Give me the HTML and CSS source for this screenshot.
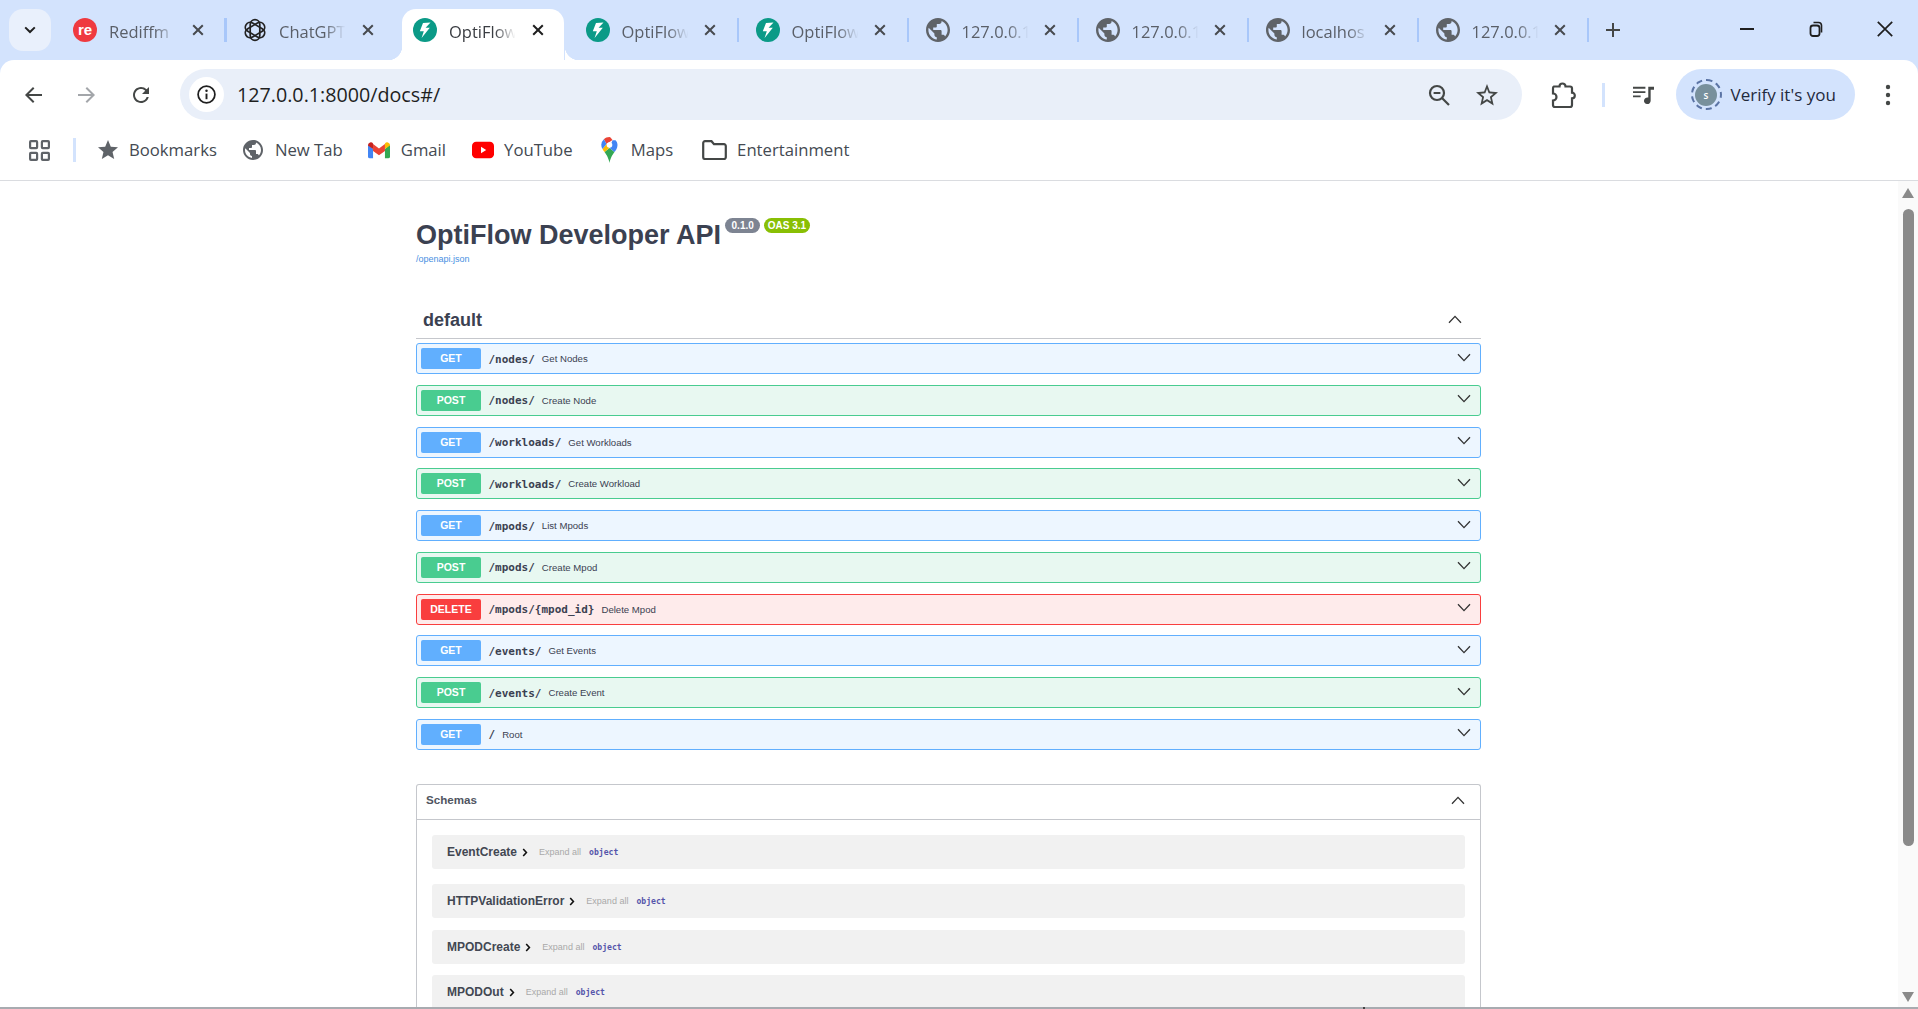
FILE: index.html
```html
<!DOCTYPE html>
<html lang="en">
<head>
<meta charset="utf-8">
<title>OptiFlow Developer API - Swagger UI</title>
<link rel="stylesheet" href="styles.css">
</head>
<body>
<svg class="defs" aria-hidden="true">
  <symbol id="i-x" viewBox="0 0 12 12"><path d="M1.2 1.2l9.6 9.6M10.8 1.2l-9.6 9.6" fill="none" stroke="currentColor" stroke-width="2"/></symbol>
  <symbol id="i-fast" viewBox="0 0 24 24"><circle cx="12" cy="12" r="12" fill="#0b9a87"/><path d="M17.500 4.400L10 5 6.800 13.200H10.800L8.600 20 16.800 9.800H12.600z" fill="#fff"/></symbol>
  <symbol id="i-globe" viewBox="2 2 20 20"><path fill="#5f6368" d="M12 2C6.48 2 2 6.48 2 12s4.48 10 10 10 10-4.48 10-10S17.52 2 12 2zm-1 17.93c-3.95-.49-7-3.85-7-7.93 0-.62.08-1.21.21-1.79L9 15v1c0 1.1.9 2 2 2v1.93zm6.9-2.54c-.26-.81-1-1.39-1.9-1.39h-1v-3c0-.55-.45-1-1-1H8v-2h2c.55 0 1-.45 1-1V7h2c1.1 0 2-.9 2-2v-.41c2.93 1.19 5 4.06 5 7.41 0 2.08-.8 3.97-2.1 5.39z"/></symbol>
  <symbol id="i-gpt" viewBox="0 0 24 24"><g fill="none" stroke="#222" stroke-width="1.7"><rect x="7.2" y="1.6" width="9.6" height="20.8" rx="4.8"/><rect x="7.2" y="1.6" width="9.6" height="20.8" rx="4.8" transform="rotate(60 12 12)"/><rect x="7.2" y="1.6" width="9.6" height="20.8" rx="4.8" transform="rotate(120 12 12)"/></g></symbol>
  <symbol id="i-down" viewBox="0 0 14 9"><path d="M1 1.2l6 6.4 6-6.4" fill="none" stroke="currentColor" stroke-width="1.3"/></symbol>
  <symbol id="i-up" viewBox="0 0 14 9"><path d="M1 7.8l6-6.4 6 6.4" fill="none" stroke="currentColor" stroke-width="1.3"/></symbol>
  <symbol id="i-right" viewBox="0 0 6 9"><path d="M1.2 1l3.2 3.5-3.2 3.5" fill="none" stroke="currentColor" stroke-width="1.6"/></symbol>
</svg>

<header class="chrome">
  <div class="tabstrip">
    <button class="tablist"><svg class="tablist-icon" viewBox="0 0 12 8"><path d="M1.2 1.4L6 6l4.8-4.6" fill="none" stroke="#1f1f1f" stroke-width="2"/></svg></button>
    <div class="tab"><span class="fav fav-re">re</span><span class="tab-title">Rediffm</span><svg class="tab-x"><use href="#i-x"/></svg><i class="tab-sep"></i></div>
    <div class="tab"><svg class="fav"><use href="#i-gpt"/></svg><span class="tab-title">ChatGPT</span><svg class="tab-x"><use href="#i-x"/></svg></div>
    <div class="tab tab-active"><svg class="fav"><use href="#i-fast"/></svg><span class="tab-title">OptiFlow</span><svg class="tab-x"><use href="#i-x"/></svg></div>
    <div class="tab"><svg class="fav"><use href="#i-fast"/></svg><span class="tab-title">OptiFlow</span><svg class="tab-x"><use href="#i-x"/></svg><i class="tab-sep"></i></div>
    <div class="tab"><svg class="fav"><use href="#i-fast"/></svg><span class="tab-title">OptiFlow</span><svg class="tab-x"><use href="#i-x"/></svg><i class="tab-sep"></i></div>
    <div class="tab"><svg class="fav"><use href="#i-globe"/></svg><span class="tab-title">127.0.0.1</span><svg class="tab-x"><use href="#i-x"/></svg><i class="tab-sep"></i></div>
    <div class="tab"><svg class="fav"><use href="#i-globe"/></svg><span class="tab-title">127.0.0.1</span><svg class="tab-x"><use href="#i-x"/></svg><i class="tab-sep"></i></div>
    <div class="tab"><svg class="fav"><use href="#i-globe"/></svg><span class="tab-title">localhos</span><svg class="tab-x"><use href="#i-x"/></svg><i class="tab-sep"></i></div>
    <div class="tab"><svg class="fav"><use href="#i-globe"/></svg><span class="tab-title">127.0.0.1</span><svg class="tab-x"><use href="#i-x"/></svg><i class="tab-sep"></i></div>
    <svg class="newtab" viewBox="0 0 16 16"><path d="M8 1v14M1 8h14" stroke="#444746" stroke-width="2" fill="none"/></svg>
    <div class="winctl">
      <svg class="win-btn" viewBox="0 0 16 16"><path d="M1 8h14" stroke="#1f1f1f" stroke-width="2"/></svg>
      <svg class="win-btn" viewBox="0 0 16 16"><rect x="2.5" y="4.5" width="9" height="10.5" rx="2.5" fill="none" stroke="#1f1f1f" stroke-width="1.8"/><path d="M5.5 1.5h5a3 3 0 0 1 3 3v7" fill="none" stroke="#1f1f1f" stroke-width="1.6"/></svg>
      <svg class="win-btn" viewBox="0 0 16 16"><path d="M.8.8l14.4 14.4M15.2.8L.8 15.2" stroke="#1f1f1f" stroke-width="1.7"/></svg>
    </div>
  </div>

  <div class="toolbar">
    <svg class="tb-btn" viewBox="0 0 24 24"><path fill="#444746" d="M21 11H7.83l5.59-5.59L12 4l-8 8 8 8 1.41-1.41L7.83 13H21v-2z"/></svg>
    <svg class="tb-btn tb-btn-gap" viewBox="0 0 24 24"><path fill="#a3a6aa" d="M3 11h13.17l-5.59-5.59L12 4l8 8-8 8-1.41-1.41L16.17 13H3v-2z"/></svg>
    <svg class="tb-btn tb-btn-gap" viewBox="0 0 24 24"><path fill="#444746" d="M17.65 6.35A7.958 7.958 0 0 0 12 4c-4.42 0-7.99 3.58-7.99 8s3.57 8 7.99 8c3.73 0 6.84-2.55 7.73-6h-2.08A5.99 5.99 0 0 1 12 18c-3.31 0-6-2.69-6-6s2.69-6 6-6c1.66 0 3.14.69 4.22 1.78L13 11h7V4l-2.35 2.35z"/></svg>
    <div class="omnibox">
      <span class="omni-info"><svg viewBox="0 0 24 24" class="omni-info-icon"><circle cx="12" cy="12" r="9.6" fill="none" stroke="#1f1f1f" stroke-width="2"/><path d="M12 11v6.4" stroke="#1f1f1f" stroke-width="2.2"/><circle cx="12" cy="7.6" r="1.4" fill="#1f1f1f"/></svg></span>
      <span class="omni-url">127.0.0.1:8000/docs#/</span>
      <svg class="omni-icon omni-zoom" viewBox="0 0 24 24"><circle cx="10" cy="10" r="7" fill="none" stroke="#444746" stroke-width="2.2"/><path d="M6.6 10h6.8" stroke="#444746" stroke-width="2"/><path d="M15 15l7 7" stroke="#444746" stroke-width="2.2"/></svg>
      <svg class="omni-icon" viewBox="0 0 24 24"><path fill="#444746" d="M23 9.2l-8.1-.7L12 1 9.100 8.500 1 9.200l6.100 5.300L5.300 22.500 12 18.300l6.700 4.200-1.800-8zM12 16l-4 2.500 1.100-4.700L5.500 10.700l4.800-.4L12 5.800l1.700 4.500 4.800.4-3.600 3.100 1.100 4.700z"/></svg>
    </div>
    <svg class="tb-ext" viewBox="0 0 26 28"><path d="M4 5.500h5.500a3 3 0 0 1 6 0H20a2 2 0 0 1 2 2v4.200a2.800 2.800 0 0 1 0 5.600V24a2 2 0 0 1-2 2H5a2 2 0 0 1-2-2v-4.500a3.500 3.500 0 0 0 0-7V7.500a2 2 0 0 1 1-2z" fill="none" stroke="#444746" stroke-width="2.200"/></svg>
    <i class="tb-sep"></i>
    <svg class="tb-media" viewBox="0 0 24 22"><path d="M1 4h13M1 8.500h13M1 13h8" stroke="#444746" stroke-width="2" fill="none"/><path d="M17 3h6v3h-3.500v11.500a3.500 3.500 0 1 1-2.500-3.300z" fill="#444746"/></svg>
    <div class="profile">
      <span class="avatar"><span class="avatar-face">s</span></span>
      <span class="profile-label">Verify it's you</span>
    </div>
    <svg class="tb-kebab" viewBox="0 0 6 22"><circle cx="3" cy="3" r="2.200" fill="#444746"/><circle cx="3" cy="11" r="2.200" fill="#444746"/><circle cx="3" cy="19" r="2.200" fill="#444746"/></svg>
  </div>

  <nav class="bookmarks">
    <svg class="bm-apps" viewBox="0 0 21 21"><g fill="none" stroke="#5f6368" stroke-width="2.200"><rect x="1.100" y="1.100" width="7" height="7" rx=".8"/><rect x="12.900" y="1.100" width="7" height="7" rx=".8"/><rect x="1.100" y="12.900" width="7" height="7" rx=".8"/><rect x="12.900" y="12.900" width="7" height="7" rx=".8"/></g></svg>
    <i class="bm-sep"></i>
    <div class="bm-list">
      <a class="bm"><svg class="bm-icon" viewBox="2 2 20 20"><path fill="#5f6368" d="M12 17.270L18.180 21l-1.640-7.030L22 9.240l-7.190-.610L12 2 9.190 8.630 2 9.240l5.460 4.730L5.820 21z"/></svg>Bookmarks</a>
      <a class="bm"><svg class="bm-icon"><use href="#i-globe"/></svg>New Tab</a>
      <a class="bm"><svg class="bm-icon" viewBox="0 0 24 18"><path fill="#4285f4" d="M0 3v13a2 2 0 0 0 2 2h3.500V8z"/><path fill="#34a853" d="M24 3v13a2 2 0 0 1-2 2h-3.500V8z"/><path fill="#ea4335" d="M5.500 2.500v7.500L12 14.800l6.500-4.800V2.500L12 7.300z"/><path fill="#c5221f" d="M0 3.500A3 3 0 0 1 5.500 2v6L0 4z"/><path fill="#fbbc04" d="M24 3.500A3 3 0 0 0 18.500 2v6L24 4z"/></svg>Gmail</a>
      <a class="bm"><svg class="bm-icon" viewBox="0 0 24 18"><rect x="0" y="0" width="24" height="18" rx="4.500" fill="#f00"/><path d="M9.800 5.500v7l5.700-3.500z" fill="#fff"/></svg>YouTube</a>
      <a class="bm"><svg class="bm-pin" viewBox="0 0 16 26"><path fill="#34a853" d="M3 15c2 3 4 5.500 5 11 1-5.500 3-8 5-11L8 11z"/><path fill="#fbbc04" d="M1 12c.5 1.200 1.200 2 2 3l5-4-3-4z"/><path fill="#4285f4" d="M11 3.200L8 11l5 4c1.200-1.600 3-3.700 3-7 0-2-.8-3.600-2-4.800z" /><path fill="#ea4335" d="M2.400 2.300L5 7l6-4C9.600 1.200 8.800 0 8 0 5.800 0 3.800.9 2.400 2.300z"/><path fill="#4285f4" d="M2.400 2.300A8 8 0 0 0 1 12l4-5z"/><circle cx="8" cy="8" r="2.800" fill="#fff"/></svg>Maps</a>
      <a class="bm bm-last"><svg class="bm-icon bm-folder" viewBox="0 0 25 20"><path d="M1.200 3a1.800 1.800 0 0 1 1.800-1.800h6.500l2.500 3H22a1.800 1.800 0 0 1 1.800 1.800v11.200a1.800 1.800 0 0 1-1.800 1.800H3a1.800 1.800 0 0 1-1.800-1.800z" fill="none" stroke="#444746" stroke-width="2.200"/></svg>Entertainment</a>
    </div>
  </nav>
</header>

<div class="viewport">
  <main class="page">
    <section class="swagger">
      <div class="info">
        <div class="title-row">
          <h1 class="title">OptiFlow Developer API</h1>
          <span class="badge badge-version">0.1.0</span>
          <span class="badge badge-oas">OAS 3.1</span>
        </div>
        <a class="spec-link">/openapi.json</a>
      </div>

      <div class="tag-head">
        <h2 class="tag-name">default</h2>
        <svg class="chev-up"><use href="#i-up"/></svg>
      </div>

      <div class="ops">
        <div class="op op-get"><span class="method">GET</span><span class="path">/nodes/</span><span class="summary">Get Nodes</span><svg class="chev-down"><use href="#i-down"/></svg></div>
        <div class="op op-post"><span class="method">POST</span><span class="path">/nodes/</span><span class="summary">Create Node</span><svg class="chev-down"><use href="#i-down"/></svg></div>
        <div class="op op-get"><span class="method">GET</span><span class="path">/workloads/</span><span class="summary">Get Workloads</span><svg class="chev-down"><use href="#i-down"/></svg></div>
        <div class="op op-post"><span class="method">POST</span><span class="path">/workloads/</span><span class="summary">Create Workload</span><svg class="chev-down"><use href="#i-down"/></svg></div>
        <div class="op op-get"><span class="method">GET</span><span class="path">/mpods/</span><span class="summary">List Mpods</span><svg class="chev-down"><use href="#i-down"/></svg></div>
        <div class="op op-post"><span class="method">POST</span><span class="path">/mpods/</span><span class="summary">Create Mpod</span><svg class="chev-down"><use href="#i-down"/></svg></div>
        <div class="op op-delete"><span class="method">DELETE</span><span class="path">/mpods/{mpod_id}</span><span class="summary">Delete Mpod</span><svg class="chev-down"><use href="#i-down"/></svg></div>
        <div class="op op-get"><span class="method">GET</span><span class="path">/events/</span><span class="summary">Get Events</span><svg class="chev-down"><use href="#i-down"/></svg></div>
        <div class="op op-post"><span class="method">POST</span><span class="path">/events/</span><span class="summary">Create Event</span><svg class="chev-down"><use href="#i-down"/></svg></div>
        <div class="op op-get"><span class="method">GET</span><span class="path">/</span><span class="summary">Root</span><svg class="chev-down"><use href="#i-down"/></svg></div>
      </div>

      <div class="schemas">
        <div class="schemas-head"><span class="schemas-title">Schemas</span><svg class="chev-up chev-up-schemas"><use href="#i-up"/></svg></div>
        <div class="schema-list">
          <div class="schema"><span class="schema-name">EventCreate</span><svg class="chev-right"><use href="#i-right"/></svg><span class="expand">Expand all</span><span class="type">object</span></div>
          <div class="schema"><span class="schema-name">HTTPValidationError</span><svg class="chev-right"><use href="#i-right"/></svg><span class="expand">Expand all</span><span class="type">object</span></div>
          <div class="schema"><span class="schema-name">MPODCreate</span><svg class="chev-right"><use href="#i-right"/></svg><span class="expand">Expand all</span><span class="type">object</span></div>
          <div class="schema"><span class="schema-name">MPODOut</span><svg class="chev-right"><use href="#i-right"/></svg><span class="expand">Expand all</span><span class="type">object</span></div>
        </div>
      </div>
    </section>
  </main>
  <aside class="scrollbar">
    <i class="sb-arrow sb-up"></i>
    <i class="sb-thumb"></i>
    <i class="sb-arrow sb-down"></i>
  </aside>
</div>
<div class="taskbar-edge"><i class="taskbar-tick"></i></div>
</body>
</html>
```

FILE: styles.css
```css
* { box-sizing: border-box; }
html, body { margin: 0; height: 100%; overflow: hidden; background: #fff; }
body { font-family: "Open Sans", "Liberation Sans", sans-serif; width: 1918px; height: 1009px; }
.defs { display: none; }
i { display: block; }

/* tab strip */
.chrome { background: #d3e3fd; }
.tabstrip { display: flex; align-items: flex-start; height: 60px; padding-left: 9px; background: #d3e3fd; }
.tablist { width: 42px; height: 42px; margin: 9px 5.5px 0 0; border: 0; border-radius: 14px; background: #e9f0fc; display: flex; align-items: center; justify-content: center; padding: 0; }
.tablist-icon { width: 12px; height: 8px; }
.tab { position: relative; display: flex; align-items: center; width: 170px; height: 51px; margin-top: 9px; padding: 0 0 9px 16.5px; color: #5a5f68; font-size: 16.5px; flex: none; }
.fav { width: 24px; height: 24px; flex: none; }
.fav-re { display: flex; align-items: center; justify-content: center; border-radius: 50%; background: #ef3a3f; color: #fff; font: bold 15px/24px "Liberation Sans", sans-serif; }
.tab-title { width: 70px; margin: 3px 0 0 12px; white-space: nowrap; flex: none; -webkit-mask-image: linear-gradient(90deg, #000 65%, transparent 95%); mask-image: linear-gradient(90deg, #000 65%, transparent 95%); }
.tab-x { width: 12px; height: 12px; margin-left: 12.5px; color: #474a4f; flex: none; }
.tab-sep { width: 2.5px; height: 24px; margin-left: auto; background: #a8c7fa; flex: none; }
.tab-active { width: 172.5px; color: #3a3d42; }
.tab-active::before { content: ""; position: absolute; z-index: 0; left: 5.5px; right: 5px; top: 0; bottom: 0; background: #fff; border-radius: 14px 14px 0 0; }
.tab-active::after { content: ""; position: absolute; z-index: 0; left: -8.5px; right: -10px; bottom: 0; height: 14px; background:
  radial-gradient(circle at 0 0, transparent 14px, #fff 14.5px) left bottom / 14px 14px no-repeat,
  radial-gradient(circle at 100% 0, transparent 14px, #fff 14.5px) right bottom / 14px 14px no-repeat; }
.tab-active > * { position: relative; z-index: 1; }
.tab-active .tab-x { color: #1f1f1f; }
.newtab { width: 16px; height: 16px; margin: 22px 0 0 15.5px; flex: none; }
.winctl { display: flex; gap: 53px; margin: 21px 0 0 118px; }
.win-btn { width: 16px; height: 16px; flex: none; }

/* toolbar */
.toolbar { display: flex; align-items: center; height: 60px; padding: 9px 0 0 13px; background: #fff; border-radius: 14px 14px 0 0; }
.tb-btn { width: 24px; height: 24px; margin: 0 8px; flex: none; }
.tb-btn-gap { margin-left: 22px; }
.omnibox { display: flex; align-items: center; width: 1342px; height: 51px; margin-left: 19px; padding: 0 23px 0 8.5px; background: #e9eff9; border-radius: 26px; flex: none; }
.omni-info { display: flex; align-items: center; justify-content: center; width: 35px; height: 35px; background: #fff; border-radius: 50%; flex: none; }
.omni-info-icon { width: 21px; height: 21px; }
.omni-url { margin-left: 13.5px; font-size: 19.7px; color: #1f1f1f; }
.omni-icon { width: 24px; height: 24px; margin-left: 24px; flex: none; }
.omni-zoom { margin-left: auto; }
.tb-ext { width: 26px; height: 28px; margin-left: 28px; flex: none; }
.tb-sep { width: 2.5px; height: 24px; margin-left: 26px; background: #d3e3fd; flex: none; }
.tb-media { width: 23px; height: 21px; margin-left: 27px; flex: none; }
.profile { display: flex; align-items: center; width: 179px; height: 51px; margin-left: 21px; padding-left: 15px; background: #d3e3fd; border-radius: 26px; flex: none; }
.avatar { display: flex; align-items: center; justify-content: center; width: 31px; height: 31px; border: 2px dashed #5b74a5; border-radius: 50%; flex: none; }
.avatar-face { display: flex; align-items: center; justify-content: center; width: 22px; height: 22px; background: #78909c; color: #fff; border-radius: 50%; font-size: 10px; font-weight: 600; flex: none; }
.profile-label { margin-left: 9px; font-size: 17px; color: #1f2a3d; white-space: nowrap; }
.tb-kebab { width: 6px; height: 22px; margin-left: 30px; flex: none; }

/* bookmarks */
.bookmarks { display: flex; align-items: center; height: 60px; padding: 0 0 2px 29px; background: #fff; }
.bm-apps { width: 21px; height: 21px; margin-top: 2px; flex: none; }
.bm-sep { width: 2.5px; height: 24px; margin: 2px 0 0 23px; background: #d3e3fd; flex: none; }
.bm-list { display: flex; align-items: center; gap: 25.5px; margin-left: 21px; }
.bm { display: flex; align-items: center; gap: 10.5px; font-size: 16.7px; color: #444a52; white-space: nowrap; }
.bm-icon { width: 22px; height: 20px; margin-top: 2px; flex: none; }
.bm-pin { width: 17px; height: 26px; margin: 2px 2px 0 3px; flex: none; }
.bm-folder { width: 25px; }
.bm-last { margin-left: 3px; }

/* page */
.viewport { display: flex; height: 827px; border-top: 1px solid #dadce0; background: #fff; overflow: hidden; }
.page { flex: 1; min-width: 0; padding-left: 416px; font-family: "Liberation Sans", Arial, sans-serif; color: #3b4151; }
.swagger { width: 1065px; }
.info { padding-top: 37px; }
.title-row { display: flex; align-items: flex-start; }
.title { margin: 4px 0 0; font-size: 27px; line-height: 27px; font-weight: 700; color: #3b4151; white-space: nowrap; }
.badge { display: block; height: 15px; margin-left: 4px; border-radius: 8px; color: #fff; font-size: 10px; font-weight: 700; line-height: 15px; white-space: nowrap; }
.badge-version { padding: 0 6.5px; background: #7d8492; }
.badge-oas { padding: 0 3.5px; background: #89bf04; }
.spec-link { display: block; margin-top: 4px; font-size: 9px; line-height: 12px; color: #4990e2; }

.tag-head { display: flex; align-items: center; justify-content: space-between; height: 39px; margin-top: 35px; padding: 0 19.5px 0 7px; border-bottom: 1px solid #c5c7cc; }
.tag-name { margin: 2px 0 0; font-size: 18px; font-weight: 700; color: #3b4151; }
.chev-up { width: 14px; height: 9px; color: #333; flex: none; }
.chev-up-schemas { margin-bottom: 3px; }

.ops { display: flex; flex-direction: column; gap: 10.78px; margin-top: 4px; }
.op { display: flex; align-items: center; height: 31px; padding: 0 9px 0 4px; border: 1px solid; border-radius: 3px; }
.op-get { background: #edf6ff; border-color: #61affe; }
.op-post { background: #e8f8f1; border-color: #49cc90; }
.op-delete { background: #feebeb; border-color: #f93e3e; }
.method { width: 60px; height: 21px; border-radius: 2px; color: #fff; font-size: 10.5px; font-weight: 700; line-height: 21px; text-align: center; flex: none; }
.op-get .method { background: #61affe; }
.op-post .method { background: #49cc90; }
.op-delete .method { background: #f93e3e; }
.path { margin: 2px 0 0 7.5px; font: 600 11px/16px "DejaVu Sans Mono", monospace; color: #3b4151; }
.summary { margin-left: 7px; font-size: 9.6px; color: #3b4151; }
.chev-down { width: 14px; height: 9px; margin: 0 0 3px auto; color: #333; flex: none; }

.schemas { margin-top: 34px; border: 1px solid #c5c7cc; border-bottom: 0; border-radius: 3px 3px 0 0; }
.schemas-head { display: flex; align-items: center; justify-content: space-between; height: 35px; padding: 0 15px 0 9px; border-bottom: 1px solid #c5c7cc; }
.schemas-title { margin-top: -5px; font-size: 11.6px; font-weight: 700; color: #505561; }
.schema-list { display: flex; flex-direction: column; padding: 15px 15px 0; }
.schema { display: flex; align-items: center; height: 34px; padding-left: 15px; background: #f1f1f1; border-radius: 3px; flex: none; }
.schema:nth-child(2) { margin-top: 15px; }
.schema:nth-child(3) { margin-top: 12px; }
.schema:nth-child(4) { margin-top: 11px; }
.schema-name { font-size: 12px; font-weight: 700; color: #424752; }
.chev-right { width: 6px; height: 9px; margin: 2px 0 0 5px; color: #111; flex: none; }
.expand { margin-left: 11px; font-size: 9px; color: #a9a9a9; }
.type { margin-left: 8px; font: 700 8.1px/12px "DejaVu Sans Mono", monospace; color: #55a; }

/* scrollbar */
.scrollbar { display: flex; flex-direction: column; align-items: center; width: 20px; height: 100%; padding-top: 7px; background: #fafafa; flex: none; }
.sb-arrow { width: 0; height: 0; border-left: 6px solid transparent; border-right: 6px solid transparent; flex: none; }
.sb-up { border-bottom: 10px solid #8a8a8a; }
.sb-down { border-top: 10px solid #8a8a8a; margin-top: 146px; }
.sb-thumb { width: 11px; height: 637px; margin-top: 11px; background: #8a8a8a; border-radius: 6px; flex: none; }

.taskbar-edge { position: relative; height: 2px; background: #a8abb0; }
.taskbar-tick { position: absolute; left: 1363px; top: 0; width: 2px; height: 2px; background: #444; }
```
